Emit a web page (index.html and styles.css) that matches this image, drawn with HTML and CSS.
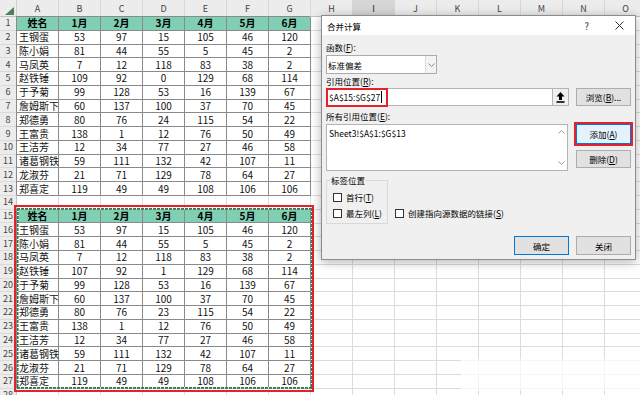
FILE: index.html
```html
<!DOCTYPE html>
<html lang="zh-CN">
<head>
<meta charset="utf-8">
<title>合并计算</title>
<link rel="stylesheet" href="styles.css">
</head>
<body>
<div class="sheet">
  <div class="colhead">
    <div class="corner"><span class="tri"></span></div>
    <div class="ch">A</div><div class="ch">B</div><div class="ch">C</div><div class="ch">D</div><div class="ch">E</div><div class="ch">F</div><div class="ch">G</div><div class="ch">H</div><div class="ch sel">I</div><div class="ch">J</div><div class="ch">K</div><div class="ch">L</div><div class="ch">M</div><div class="ch">N</div><div class="ch">O</div>
  </div>
  <div class="sbody">
    <div class="rowhead">
      <div class="rh">1</div><div class="rh">2</div><div class="rh">3</div><div class="rh">4</div><div class="rh">5</div><div class="rh">6</div><div class="rh">7</div><div class="rh">8</div><div class="rh">9</div><div class="rh">10</div><div class="rh">11</div><div class="rh">12</div><div class="rh">13</div><div class="rh">14</div><div class="rh">15</div><div class="rh">16</div><div class="rh">17</div><div class="rh">18</div><div class="rh">19</div><div class="rh">20</div><div class="rh">21</div><div class="rh">22</div><div class="rh">23</div><div class="rh">24</div><div class="rh">25</div><div class="rh">26</div><div class="rh">27</div><div class="rh">28</div>
    </div>
    <div class="cells">
      <div class="tbl">
        <div class="h">姓名</div><div class="h">1月</div><div class="h">2月</div><div class="h">3月</div><div class="h">4月</div><div class="h">5月</div><div class="h">6月</div>
        <div class="n">王钢蛋</div><div>53</div><div>97</div><div>15</div><div>105</div><div>46</div><div>120</div>
        <div class="n">陈小娟</div><div>81</div><div>44</div><div>55</div><div>5</div><div>45</div><div>2</div>
        <div class="n">马凤英</div><div>7</div><div>12</div><div>118</div><div>83</div><div>38</div><div>2</div>
        <div class="n">赵铁锤</div><div>109</div><div>92</div><div>0</div><div>129</div><div>68</div><div>114</div>
        <div class="n">于予菊</div><div>99</div><div>128</div><div>53</div><div>16</div><div>139</div><div>67</div>
        <div class="n clip">詹姆斯下士</div><div>60</div><div>137</div><div>100</div><div>37</div><div>70</div><div>45</div>
        <div class="n">郑德勇</div><div>80</div><div>76</div><div>24</div><div>115</div><div>54</div><div>22</div>
        <div class="n">王富贵</div><div>138</div><div>1</div><div>12</div><div>76</div><div>50</div><div>49</div>
        <div class="n">王洁芳</div><div>12</div><div>34</div><div>77</div><div>27</div><div>46</div><div>58</div>
        <div class="n">诸葛钢铁</div><div>59</div><div>111</div><div>132</div><div>42</div><div>107</div><div>11</div>
        <div class="n">龙淑芬</div><div>21</div><div>71</div><div>129</div><div>78</div><div>64</div><div>27</div>
        <div class="n">郑喜定</div><div>119</div><div>49</div><div>49</div><div>108</div><div>106</div><div>106</div>
      </div>
      <div class="spacer"></div>
      <div class="tbl tbl2">
        <div class="h">姓名</div><div class="h">1月</div><div class="h">2月</div><div class="h">3月</div><div class="h">4月</div><div class="h">5月</div><div class="h">6月</div>
        <div class="n">王钢蛋</div><div>53</div><div>97</div><div>15</div><div>105</div><div>46</div><div>120</div>
        <div class="n">陈小娟</div><div>81</div><div>44</div><div>55</div><div>5</div><div>45</div><div>2</div>
        <div class="n">马凤英</div><div>7</div><div>12</div><div>118</div><div>83</div><div>38</div><div>2</div>
        <div class="n">赵铁锤</div><div>107</div><div>92</div><div>1</div><div>129</div><div>68</div><div>114</div>
        <div class="n">于予菊</div><div>99</div><div>128</div><div>53</div><div>16</div><div>139</div><div>67</div>
        <div class="n clip">詹姆斯下士</div><div>60</div><div>137</div><div>100</div><div>37</div><div>70</div><div>45</div>
        <div class="n">郑德勇</div><div>80</div><div>76</div><div>23</div><div>115</div><div>54</div><div>22</div>
        <div class="n">王富贵</div><div>138</div><div>1</div><div>12</div><div>76</div><div>50</div><div>49</div>
        <div class="n">王洁芳</div><div>12</div><div>34</div><div>77</div><div>27</div><div>46</div><div>58</div>
        <div class="n">诸葛钢铁</div><div>59</div><div>111</div><div>132</div><div>42</div><div>107</div><div>11</div>
        <div class="n">龙淑芬</div><div>21</div><div>71</div><div>129</div><div>78</div><div>64</div><div>27</div>
        <div class="n">郑喜定</div><div>119</div><div>49</div><div>49</div><div>108</div><div>106</div><div>106</div>
      </div>
    </div>
  </div>
  <div class="fade"></div>

  <div class="dialog">
    <div class="dtitle">
      <span>合并计算</span>
      <span class="help">?</span>
      <svg class="close" width="9" height="9" viewBox="0 0 9 9"><path d="M0.5 0.5 L8.5 8.5 M8.5 0.5 L0.5 8.5" stroke="#333" stroke-width="1" fill="none"/></svg>
    </div>
    <div class="dbody">
      <div class="lbl">函数(<u>F</u>):</div>
      <div class="select">
        <span class="sv">标准偏差</span>
        <span class="sarrow"><svg width="7" height="4" viewBox="0 0 7 4"><path d="M0.5 0.5 L3.5 3.5 L6.5 0.5" stroke="#888" stroke-width="1" fill="none"/></svg></span>
      </div>
      <div class="lbl l2">引用位置(<u>R</u>):</div>
      <div class="row r1">
        <div class="refin">
          <div class="field">$A$15:$G$27<span class="caret"></span></div>
          <div class="collapse"><svg width="9" height="11" viewBox="0 0 9 11"><path d="M4.5 0 L8.5 4.6 H6 V8 H3 V4.6 H0.5 Z" fill="#000"/><rect x="0.5" y="9.2" width="8" height="1.6" fill="#000"/></svg></div>
          <div class="hl"></div>
        </div>
        <div class="btn browse">浏览(<u>B</u>)...</div>
      </div>
      <div class="lbl l3">所有引用位置(<u>E</u>):</div>
      <div class="row r2">
        <div class="list">
          <div class="ltext">Sheet3!$A$1:$G$13</div>
          <div class="vscroll">
            <svg width="7" height="4" viewBox="0 0 7 4"><path d="M0.5 3.5 L3.5 0.5 L6.5 3.5" stroke="#999" stroke-width="1" fill="none"/></svg>
            <svg width="7" height="4" viewBox="0 0 7 4"><path d="M0.5 0.5 L3.5 3.5 L6.5 0.5" stroke="#999" stroke-width="1" fill="none"/></svg>
          </div>
        </div>
        <div class="btncol">
          <div class="btn add">添加(<u>A</u>)</div>
          <div class="btn del">删除(<u>D</u>)</div>
        </div>
      </div>
      <div class="row r3">
        <fieldset class="grp">
          <legend>标签位置</legend>
          <div class="chk"><span class="box"></span>首行(<u>T</u>)</div>
          <div class="chk c2"><span class="box"></span>最左列(<u>L</u>)</div>
        </fieldset>
        <div class="chk link"><span class="box"></span>创建指向源数据的链接(<u>S</u>)</div>
      </div>
      <div class="foot">
        <div class="btn ok">确定</div>
        <div class="btn">关闭</div>
      </div>
    </div>
  </div>
</div>
</body>
</html>
```

FILE: styles.css
```css
* { box-sizing: border-box; }
html, body { margin: 0; padding: 0; }
body {
  width: 640px;
  height: 395px;
  overflow: hidden;
  background: #fff;
  font-family: "Noto Sans CJK SC", "Noto Sans", sans-serif;
}
.sheet {
  position: relative;
  width: 640px;
  height: 395px;
  overflow: hidden;
}

/* column header */
.colhead {
  display: flex;
  height: 17px;
  background: #ececec;
  border-bottom: 1px solid #c2c2c2;
}
.corner {
  width: 17px;
  flex: none;
  display: flex;
  justify-content: flex-end;
  align-items: flex-end;
  padding: 0 2px 1px 0;
  border-right: 1px solid #d0d0d0;
}
.tri {
  width: 0;
  height: 0;
  border-left: 9px solid transparent;
  border-bottom: 8px solid #4c7f5e;
}
.ch {
  width: 42px;
  flex: none;
  border-right: 1px solid #d8d8d8;
  font-size: 9px;
  color: #444;
  display: flex;
  align-items: center;
  justify-content: center;
}
.ch.sel { background: #d6d6d6; color: #222; }

/* sheet body */
.sbody { display: flex; }
.rowhead {
  width: 17px;
  flex: none;
  background: #ececec;
  border-right: 1px solid #c2c2c2;
}
.rh {
  height: 13.77px;
  font-size: 9px;
  line-height: 10px;
  color: #444;
  display: flex;
  align-items: center;
  justify-content: center;
  border-bottom: 1px solid #dadada;
}
.cells {
  flex: 1;
  height: 400px;
  background-color: #fff;
  background-image:
    repeating-linear-gradient(to right, transparent 0 41px, #dcdcdc 41px 42px),
    repeating-linear-gradient(to bottom, transparent 0 12.77px, #dcdcdc 12.77px 13.77px);
}
.tbl {
  display: grid;
  grid-template-columns: repeat(7, 42px);
  grid-auto-rows: 13.77px;
  width: 294px;
  box-shadow: -1px -1px 0 0 #8a8a8a;
}
.tbl > div {
  border-right: 1px solid #8a8a8a;
  border-bottom: 1px solid #8a8a8a;
  background: #fff;
  font-size: 10px;
  line-height: 12px;
  color: #111;
  display: flex;
  align-items: center;
  justify-content: center;
  white-space: nowrap;
}
.tbl > .n { justify-content: flex-start; padding-left: 2px; }
.tbl > .clip { overflow: hidden; }
.tbl > .h { background: #80cfb4; font-weight: bold; color: #000; }
.spacer { height: 13.77px; }

.tbl2 { position: relative; }
.tbl2::before {
  content: "";
  position: absolute;
  left: -3px;
  top: -5px;
  right: -3px;
  bottom: -3px;
  border: 2px solid #e3222b;
}
.tbl2::after {
  content: "";
  position: absolute;
  left: 0;
  top: -2px;
  right: -1px;
  bottom: 0;
  background:
    repeating-linear-gradient(90deg, #2a7a4c 0 3px, #fff 3px 4px) left top / 100% 1.5px no-repeat,
    repeating-linear-gradient(90deg, #2a7a4c 0 3px, #fff 3px 4px) left bottom / 100% 1.5px no-repeat,
    repeating-linear-gradient(180deg, #2a7a4c 0 3px, #fff 3px 4px) left top / 1.5px 100% no-repeat,
    repeating-linear-gradient(180deg, #2a7a4c 0 3px, #fff 3px 4px) right top / 1.5px 100% no-repeat;
}

.fade {
  position: absolute;
  left: 461px;
  top: 359px;
  width: 179px;
  height: 31px;
  background: rgba(255, 255, 255, 0.7);
}

/* dialog */
.dialog {
  position: absolute;
  left: 321px;
  top: 15px;
  width: 315px;
  height: 245px;
  border: 1px solid #8c8c8c;
  background: #f0f0f0;
  box-shadow: 0 2px 10px rgba(0, 0, 0, 0.3);
  font-size: 8.5px;
  color: #000;
  display: flex;
  flex-direction: column;
}
.dtitle {
  height: 19px;
  flex: none;
  background: #fff;
  display: flex;
  align-items: center;
  padding-left: 5px;
  font-size: 8.5px;
}
.help {
  margin-left: auto;
  font-size: 9.5px;
  color: #333;
}
.close {
  margin-left: 26px;
  margin-right: 11px;
}
.dbody {
  padding: 6px 4px 0 4px;
  display: flex;
  flex-direction: column;
}
.lbl {
  height: 12px;
  line-height: 12px;
}
.l2 { margin-top: 1px; }
.l3 { margin-top: 4px; }

.select {
  margin-top: 2px;
  width: 111px;
  height: 19px;
  background: #fff;
  border: 1px solid #ababab;
  display: flex;
  align-items: stretch;
}
.sv {
  flex: 1;
  padding-left: 1px;
  display: flex;
  align-items: center;
}
.sarrow {
  width: 11px;
  border-left: 1px solid #dcdcdc;
  background: #f4f4f4;
  display: flex;
  align-items: center;
  justify-content: center;
}

.row { display: flex; }
.r1 { margin-top: 1px; height: 18px; }
.refin {
  position: relative;
  width: 243px;
  display: flex;
}
.field {
  flex: 1;
  background: #fff;
  border: 1px solid #b4b4b4;
  padding-left: 2px;
  display: flex;
  align-items: center;
}
.caret {
  width: 1px;
  height: 12px;
  background: #000;
  margin-left: 1px;
}
.collapse {
  width: 16px;
  background: #f0f0f0;
  border: 1px solid #b4b4b4;
  border-left: none;
  display: flex;
  align-items: center;
  justify-content: center;
}
.hl {
  position: absolute;
  left: 0;
  top: 0;
  width: 62px;
  height: 19px;
  border: 2px solid #e3222b;
}

.btn {
  width: 55px;
  background: #e1e1e1;
  border: 1px solid #adadad;
  display: flex;
  align-items: center;
  justify-content: center;
}
.browse { margin-left: 7px; height: 18px; }

.r2 { margin-top: 2px; }
.list {
  width: 242px;
  height: 47px;
  background: #fff;
  border: 1px solid #b4b4b4;
  display: flex;
}
.ltext {
  flex: 1;
  padding: 2px 0 0 2px;
  line-height: 12px;
}
.vscroll {
  width: 12px;
  display: flex;
  flex-direction: column;
  justify-content: space-between;
  align-items: center;
  padding: 5px 0 5px;
}
.btncol {
  margin-left: 8px;
  display: flex;
  flex-direction: column;
}
.add {
  position: relative;
  height: 20px;
  background: #e5f1fb;
  border-color: #0078d7;
}
.add::after {
  content: "";
  position: absolute;
  left: -3px;
  top: -3px;
  right: -3px;
  bottom: -3px;
  border: 2px solid #e3222b;
}
.del { margin-top: 6px; height: 18px; }

.r3 { margin-top: 3px; align-items: flex-end; }
.grp {
  margin: 0;
  width: 62px;
  border: 1px solid #d9d9d9;
  padding: 5px 0 4px 6px;
  min-width: 0;
}
.grp legend {
  padding: 0 1px;
  margin-left: -3px;
  line-height: 12px;
  height: 12px;
}
.chk {
  display: flex;
  align-items: center;
  height: 12px;
  white-space: nowrap;
}
.c2 { margin-top: 4px; }
.box {
  width: 9px;
  height: 9px;
  background: #fff;
  border: 1px solid #333;
  margin-right: 4px;
  flex: none;
}
.link { margin-left: 7px; margin-bottom: 5px; }

.foot {
  margin-top: 12px;
  display: flex;
  justify-content: flex-end;
  gap: 7px;
  height: 19px;
}
.ok { border-color: #0078d7; }
```
